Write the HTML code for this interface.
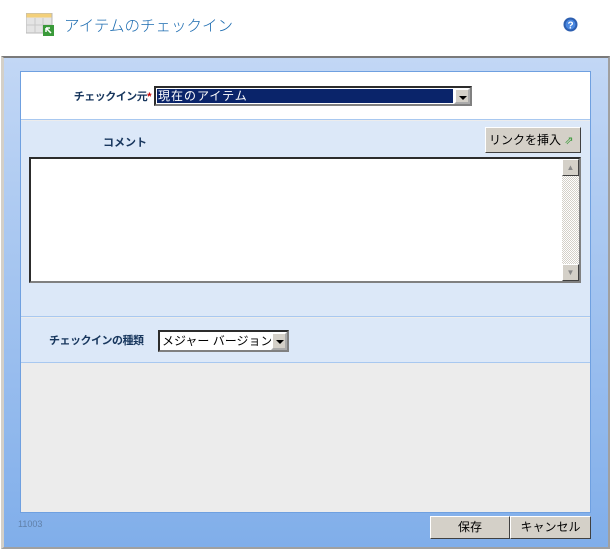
<!DOCTYPE html>
<html><head><meta charset="utf-8"><style>
*{margin:0;padding:0;box-sizing:border-box}
body{width:612px;height:550px;background:#fff;position:relative;overflow:hidden;font-family:"Liberation Sans","Noto Sans CJK JP",sans-serif}
.a{position:absolute;white-space:nowrap}
.title{left:64px;top:14px;font-size:15.5px;color:#1b6bb0;font-weight:300}
.frame{left:1px;top:56px;width:609px;height:493px;border-top:2px solid #7a7a7a;border-left:3px solid #d4d0c8;border-right:2px solid #a0a0a0;border-bottom:2px solid #a0a0a0;background:linear-gradient(#c2d7f5,#80aeea)}
.panel{left:20px;top:71px;width:571px;height:442px;border:1px solid #6fa0e0;background:#ececec}
.lbl{font-size:11px;font-weight:bold;color:#17365d}
.sel{border:2px inset #808080;background:#fff;font-size:12px}
.arrow{position:absolute;right:0;top:0;width:16px;height:100%;background:#d4d0c8;border:2px outset #fff}
.arrow:after{content:"";position:absolute;left:3px;top:6px;border-left:4px solid transparent;border-right:4px solid transparent;border-top:4px solid #000}
.btn{background:#d4d0c8;border:1px solid;border-color:#fff #404040 #404040 #fff;font-size:12px;text-align:center;color:#000}
</style></head><body>
<svg class="a" style="left:26px;top:13px" width="29" height="23" viewBox="0 0 29 23">
<rect x="0" y="0" width="26" height="20" fill="#e4e4e4" stroke="#b8b8b8"/>
<rect x="0.5" y="0.5" width="25" height="4" fill="#f3d07a"/>
<line x1="9" y1="5" x2="9" y2="20" stroke="#c8c8c8"/><line x1="17" y1="5" x2="17" y2="20" stroke="#c8c8c8"/>
<line x1="0" y1="12" x2="26" y2="12" stroke="#c8c8c8"/>
<rect x="17" y="12" width="11" height="11" fill="#3a9a3a"/>
<path d="M20 15 L25 20 M20 15 L20 19 M20 15 L24 15" stroke="#fff" stroke-width="1.5" fill="none"/>
</svg>
<div class="a title">アイテムのチェックイン</div>
<svg class="a" style="left:563px;top:17px" width="15" height="15" viewBox="0 0 15 15"><circle cx="7.5" cy="7.5" r="7" fill="#2d5fb0"/><circle cx="7.5" cy="7.5" r="5" fill="#4a88e0"/><text x="7.5" y="11.5" font-size="10" font-weight="bold" fill="#fff" text-anchor="middle" font-family="Liberation Sans">?</text></svg>
<div class="a frame"></div>
<div class="a panel">
 <div class="a" style="left:0;top:0;width:569px;height:48px;background:#fff;border-bottom:1px solid #a8c8f0"></div>
 <div class="a lbl" style="right:439px;top:16px;letter-spacing:-0.5px">チェックイン元<span style="color:#c00">*</span></div>
 <div class="a sel" style="left:133px;top:14px;width:318px;height:20px">
  <div class="a" style="left:1px;top:1px;width:296px;height:14px;background:#0a246a;color:#fff;font-size:12px;line-height:14px;padding-left:1px;outline:1px dotted #fff;letter-spacing:1px">現在のアイテム</div>
  <div class="arrow"></div></div>
 <div class="a" style="left:0;top:49px;width:569px;height:196px;background:#dce8f8;border-bottom:1px solid #a8c8f0"></div>
 <div class="a lbl" style="left:82px;top:62px">コメント</div>
 <div class="a btn" style="left:464px;top:55px;width:96px;height:26px;line-height:24px;text-align:left;padding-left:3px">リンクを挿入 <span style="color:#3a9a3a;font-size:11px">⇗</span></div>
 <div class="a" style="left:8px;top:85px;width:552px;height:126px;border:2px inset #808080;background:#fff">
  <div class="a" style="right:0;top:0;width:17px;height:122px;background:repeating-conic-gradient(#d4d0c8 0 25%,#fff 0 50%) 0 0/2px 2px"></div>
  <div class="a btn" style="right:0;top:0;width:17px;height:17px;font-size:8px;color:#888;line-height:15px">▲</div>
  <div class="a btn" style="right:0;bottom:0;width:17px;height:17px;font-size:8px;color:#888;line-height:15px">▼</div>
 </div>
 <div class="a" style="left:0;top:246px;width:569px;height:45px;background:#dce8f8;border-bottom:1px solid #a8c8f0"></div>
 <div class="a lbl" style="left:28px;top:260px;letter-spacing:-0.5px">チェックインの種類</div>
 <div class="a sel" style="left:137px;top:258px;width:131px;height:22px;line-height:18px;padding-left:2px">メジャー バージョン<div class="arrow"></div></div>
</div>
<div class="a" style="left:18px;top:519px;font-size:9px;color:#6080a8">11003</div>
<div class="a btn" style="left:430px;top:516px;width:80px;height:23px;line-height:21px">保存</div>
<div class="a btn" style="left:510px;top:516px;width:81px;height:23px;line-height:21px">キャンセル</div>
</body></html>
